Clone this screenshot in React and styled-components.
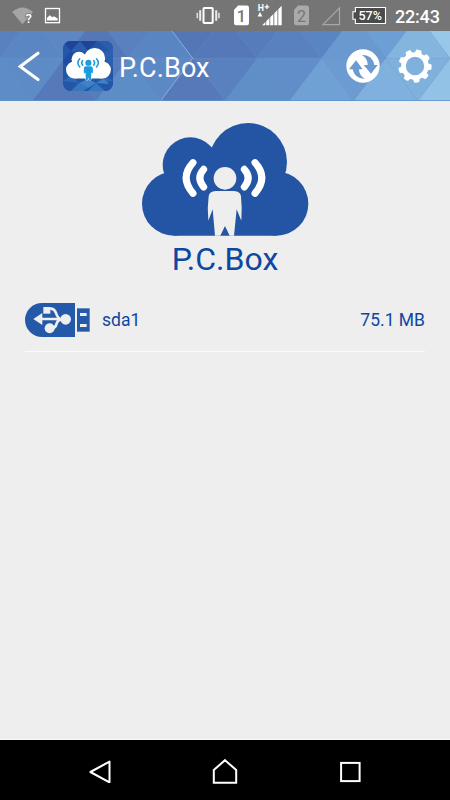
import React from 'react';
import styled, { createGlobalStyle } from 'styled-components';

const GlobalStyle = createGlobalStyle`
  * {
    box-sizing: border-box;
  }
  body {
    margin: 0;
    background: #eeeeee;
    font-family: Roboto, "Liberation Sans", sans-serif;
  }
  svg {
    display: block;
    flex: none;
  }
`;

const Screen = styled.div`
  display: flex;
  flex-direction: column;
  height: 100vh;
  min-height: 800px;
`;

const StatusBar = styled.div`
  display: flex;
  height: 31px;
  background: #757575;
`;

const StatusGroup = styled.div`
  display: flex;
`;

const Spacer = styled.div`
  flex: 1;
`;

const Clock = styled.div`
  width: 61px;
  padding-left: 6px;
  color: white;
  font-size: 18px;
  font-weight: 500;
  line-height: 33px;
  letter-spacing: -0.2px;
`;

const HeaderBar = styled.header`
  position: relative;
  height: 70px;
  overflow: hidden;
  background: #5b82c0;
`;

const Backdrop = styled.svg`
  position: absolute;
  top: 0;
  left: 0;
`;

const HeaderContent = styled.div`
  position: relative;
  display: flex;
  align-items: center;
  height: 70px;
  padding: 0 18px 0 17px;
`;

const AppIcon = styled.div`
  width: 50px;
  height: 50px;
  margin-left: 22px;
  border-radius: 8px;
  overflow: hidden;
  display: grid;
  background: #245bab;

  > svg {
    grid-area: 1 / 1;
  }
`;

const IconCloud = styled.div`
  grid-area: 1 / 1;
  z-index: 1;
  padding: 7px 0 0 2.5px;
`;

const Title = styled.div`
  flex: 1;
  margin-left: 6px;
  color: white;
  font-size: 27px;
  font-weight: 400;
  line-height: 32px;
  letter-spacing: 0.1px;
  padding-top: 3px;
`;

const Actions = styled.div`
  display: flex;
  gap: 18px;
`;

const Content = styled.main`
  flex: 1;
  background: #eeeeee;
  border-bottom: 1px solid #fafafa;
  padding: 21.67px 25px 0;
`;

const Brand = styled.div`
  display: flex;
  flex-direction: column;
  align-items: center;
`;

const BrandName = styled.div`
  margin-top: 4.6px;
  color: #0d47a1;
  font-size: 32px;
  line-height: 38px;
`;

const DriveRow = styled.div`
  display: flex;
  align-items: center;
  height: 63px;
  margin-top: 11px;
  border-bottom: 1px solid #fbfbfb;
  color: #0d47a1;
  font-size: 17.5px;
`;

const DriveName = styled.div`
  flex: 1;
  margin-left: 12px;
`;

const DriveSize = styled.div`
  text-align: right;
`;

const NavBar = styled.nav`
  display: grid;
  grid-template-columns: repeat(3, 125px);
  justify-content: center;
  align-items: center;
  justify-items: center;
  height: 60px;
  background: black;
`;

// every triangle of the header mosaic sits on a 64.3px lattice
const STEP = 64.3;
const UPPER_UP = ['#5a86c3', '#5477b8', '#5985c3', '#5478b8', '#5981c0', '#6a99cf', '#84b5df'];
const UPPER_DOWN = ['#5981c1', '#5c87c3', '#5a80bf', '#5376b7', '#567cbc', '#5a85c3', '#6c9fd3', '#99c7ea'];
const LOWER_DOWN = ['#5d8bc6', '#577cbb', '#5c89c5', '#5981bf', '#618ec8', '#6b9bd1', '#7fb1dc'];
const LOWER_UP = ['#5d8cc6', '#5679b9', '#5d8dc7', '#5579b9', '#608fc8', '#70a1d4', '#80b1de', '#92c2e6'];

function Mosaic() {
  const tri = (points, fill) => (
    <polygon key={points} points={points} fill={fill} stroke="#8fb4e0" strokeWidth="0.3" strokeOpacity="0.35" />
  );
  return (
    <Backdrop width="450" height="70" viewBox="0 0 450 70">
      {UPPER_DOWN.map((c, k) =>
        tri(`${k * STEP},27.3 ${(k - 0.5) * STEP},-15 ${(k + 0.5) * STEP},-15`, c))}
      {UPPER_UP.map((c, k) =>
        tri(`${k * STEP},27.3 ${(k + 1) * STEP},27.3 ${(k + 0.5) * STEP},-15`, c))}
      {LOWER_UP.map((c, k) =>
        tri(`${k * STEP},27.3 ${(k - 0.5) * STEP},69.7 ${(k + 0.5) * STEP},69.7`, c))}
      {LOWER_DOWN.map((c, k) =>
        tri(`${k * STEP},27.3 ${(k + 1) * STEP},27.3 ${(k + 0.5) * STEP},69.7`, c))}
      <path d="M172 0L192.7 27.3L160.7 69.7" fill="none" stroke="#bcd3ee" strokeWidth="0.6" strokeOpacity="0.8" />
      <path d="M0 69.6H450" stroke="#5d93cc" strokeWidth="0.8" />
    </Backdrop>
  );
}

const PERSON = 'M256 227H311Q330 228 332 243Q336 280 333 316L319 282L311 361H298L284 332L270 361H254L247 282L234 316Q230 280 235 243Q237 228 256 227Z';
const SMALL_PERSON = 'M256 227H311Q330 228 332 243Q336 280 333 306L317 296L311 378H292L284 350L276 378H257L251 296L234 306Q230 280 235 243Q237 228 256 227Z';

function CloudLogo({ width, cloud, person, waves, small }) {
  return (
    <svg width={width} height={width * 0.676} viewBox="35 23 500 338" overflow="visible">
      <g fill={cloud}>
        <circle cx="131" cy="265" r="96" />
        <circle cx="180" cy="149" r="83" />
        <circle cx="353" cy="140" r="117" />
        <circle cx="438" cy="265" r="96" />
        <path d="M131 361V170L245 95L430 190L438 361Z" />
      </g>
      <circle cx="284" cy="189" r="34" fill={person} />
      <path
        d={small ? SMALL_PERSON : PERSON}
        fill={person}
        stroke={small ? 'white' : 'none'}
        strokeWidth="10"
        paintOrder="stroke"
      />
      <g fill="none" stroke={waves} strokeWidth={small ? 17 : 21} strokeLinecap="round">
        <path d="M188 142Q147 187 188 234" />
        <path d="M220 162Q197 187 220 215" />
        <path d="M342 162Q365 187 342 215" />
        <path d="M374 142Q415 187 374 234" />
      </g>
    </svg>
  );
}

function IconPattern() {
  return (
    <svg width="50" height="50" viewBox="0 0 50 50">
      <rect width="50" height="50" fill="#2356a7" />
      <path d="M0 0H17L8 10ZM17 0H34L25 10Z" fill="#20439a" />
      <path d="M8 10L17 0L25 10ZM34 0L50 0V12Z" fill="#2a5dae" />
      <path d="M0 20L8 10L16 20L8 32Z" fill="#204a9e" />
      <path d="M38 12L50 8V28Z" fill="#2b60b0" />
      <path d="M0 40L8 34L16 42ZM33 42L42 34L50 40Z" fill="#2c68b5" />
      <path d="M16 42L25 38L33 42L25 47ZM33 42L41 38L46 43Z" fill="#3f82c8" />
      <path d="M16 42L25 47L20 50H8ZM33 42L42 50H25Z" fill="#3777c0" />
    </svg>
  );
}

function BackArrow() {
  return (
    <svg width="24" height="34" viewBox="17 49 24 34">
      <path d="M38 53.2L20.2 66.4L38 79.6" fill="none" stroke="white" strokeWidth="3.1" strokeLinecap="round" />
    </svg>
  );
}

function SyncIcon() {
  return (
    <svg width="34" height="34" viewBox="362 63 102 102">
      <path
        fill="white"
        fillRule="evenodd"
        d="M463 114A50 50 0 1 1 363 114A50 50 0 1 1 463 114Z
           M371 124L392 97L412 124H401Q401 142 418 152Q388 153 382 124Z
           M415 111H427Q427 90 409 80Q441 80 447 111H457L437 137Z"
      />
    </svg>
  );
}

function GearIcon() {
  const teeth = Array.from({ length: 9 }, (_, i) => i * 40 + 4);
  return (
    <svg width="34" height="34" viewBox="-17 -17 34 34">
      <circle r="11.5" fill="none" stroke="white" strokeWidth="4.6" />
      {teeth.map((a) => (
        <path key={a} d="M12.5 -3.4L16.4 -2.6Q16.9 0 16.4 2.6L12.5 3.4Z" fill="white" transform={`rotate(${a})`} />
      ))}
    </svg>
  );
}

function UsbIcon() {
  return (
    <svg width="65" height="34" viewBox="30 24 195 102">
      <path d="M180 24V126H81A51 51 0 0 1 81 24Z" fill="#2459a9" />
      <rect x="186" y="40" width="38" height="70" fill="#2459a9" />
      <rect x="195" y="54" width="20" height="9" fill="#eeeeee" />
      <rect x="195" y="87" width="20" height="9" fill="#eeeeee" />
      <g fill="#eeeeee">
        <path d="M55 72L82 54V90Z" />
        <rect x="85" y="36" width="21" height="20" />
        <circle cx="152" cy="73" r="16" />
        <circle cx="104" cy="100" r="15" />
      </g>
      <path d="M78 72H150M104 41Q118 40 123 54Q128 72 142 73M104 100Q121 101 124 88Q128 73 142 73" fill="none" stroke="#eeeeee" strokeWidth="8" />
    </svg>
  );
}

function StatusIcons() {
  return (
    <StatusGroup>
      {/* vibrate */}
      <svg width="34" height="31" viewBox="194 0 34 31">
        <rect x="203.5" y="8" width="9.2" height="15" rx="0.8" fill="none" stroke="white" strokeWidth="2" />
        <path d="M200.2 10.3V20.8M216.2 10.3V20.8" stroke="#ededed" strokeWidth="2" />
        <path d="M197.3 12.7V18.3M218.9 12.7V18.3" stroke="#dedede" strokeWidth="1.6" />
      </svg>
      {/* sim 1 */}
      <svg width="28" height="31" viewBox="228 0 28 31">
        <path d="M238 5.5H247Q249 5.5 249 7.5V23Q249 25.3 247 25.3H236Q234 25.3 234 23V10Z" fill="white" />
        <text x="241.4" y="21.6" textAnchor="middle" fontSize="16" fontWeight="500" fill="#757575">1</text>
      </svg>
      {/* signal */}
      <svg width="34" height="31" viewBox="256 0 34 31">
        <text x="257.7" y="10.6" fontSize="8.8" fontWeight="700" fill="white">H</text>
        <path d="M264.6 6.8H269.2M266.9 4.5V9.1" stroke="white" strokeWidth="1.3" />
        <path d="M257.6 16.4L260 12L262.4 16.4Z" fill="white" />
        <path d="M262.2 25.3L265.4 22.1V25.3ZM266.2 25.3V21.3L269.4 18.1V25.3ZM270.2 25.3V17.3L273.4 14.1V25.3ZM274.3 25.3V13.2L277.4 10.1V25.3ZM278.3 25.3V9.2L281.7 5.8V25.3Z" fill="white" />
      </svg>
      {/* sim 2 */}
      <svg width="28" height="31" viewBox="290 0 28 31">
        <path d="M298 5.5H307Q309 5.5 309 7.5V23Q309 25.3 307 25.3H296Q294 25.3 294 23V10Z" fill="#aaaaaa" />
        <text x="301.4" y="21.6" textAnchor="middle" fontSize="16" fill="#757575">2</text>
      </svg>
      {/* empty signal */}
      <svg width="31" height="31" viewBox="318 0 31 31">
        <path d="M323 24.7L339.5 8V24.7Z" fill="none" stroke="#a7a7a7" strokeWidth="1.2" />
      </svg>
      {/* battery */}
      <svg width="40" height="31" viewBox="349 0 40 31">
        <path d="M355.4 7.5H385.5V23.5H355.4V19.2H352.9V11.8H355.4Z" fill="#4b4b4b" stroke="white" strokeWidth="1.1" />
        <text x="370.2" y="20.2" textAnchor="middle" fontSize="12.8" fontWeight="500" fill="white" textLength="23.5" lengthAdjust="spacingAndGlyphs">57%</text>
      </svg>
    </StatusGroup>
  );
}

function Notifications() {
  return (
    <StatusGroup>
      <svg width="64" height="31" viewBox="0 0 64 31">
        <path d="M12.2 12Q22.5 3 33 12L22.5 24.3Z" fill="#a5a5a5" />
        <text x="28.7" y="22.7" textAnchor="middle" fontSize="13" fontWeight="500" fill="white" stroke="#757575" strokeWidth="1.6" paintOrder="stroke">?</text>
        <rect x="45.5" y="8.5" width="14" height="14.2" fill="none" stroke="white" strokeWidth="1.3" />
        <path d="M47 20.5V18L49.7 15.3L52.5 17.3L54 16.3L57.7 18.6V20.5Z" fill="white" />
      </svg>
    </StatusGroup>
  );
}

const App = () => (
  <Screen>
    <GlobalStyle />
    <StatusBar>
      <Notifications />
      <Spacer />
      <StatusIcons />
      <Clock>22:43</Clock>
    </StatusBar>
    <HeaderBar>
      <Mosaic />
      <HeaderContent>
        <BackArrow />
        <AppIcon>
          <IconPattern />
          <IconCloud>
            <CloudLogo small width={45} cloud="white" person="#1c9ce0" waves="#1c9ce0" />
          </IconCloud>
        </AppIcon>
        <Title>P.C.Box</Title>
        <Actions>
          <SyncIcon />
          <GearIcon />
        </Actions>
      </HeaderContent>
    </HeaderBar>
    <Content>
      <Brand>
        <CloudLogo width={166.67} cloud="#2355a4" person="#eeeeee" waves="white" />
        <BrandName>P.C.Box</BrandName>
      </Brand>
      <DriveRow>
        <UsbIcon />
        <DriveName>sda1</DriveName>
        <DriveSize>75.1 MB</DriveSize>
      </DriveRow>
    </Content>
    <NavBar>
      <svg width="24" height="26" viewBox="88 757 24 26">
        <path d="M90.4 772L109.5 761.6V782.4Z" fill="none" stroke="white" strokeWidth="2" strokeLinejoin="round" />
      </svg>
      <svg width="26" height="26" viewBox="212 757 26 26" overflow="visible">
        <path d="M225 760.2L236.2 770V782.7H213.8V770Z" fill="none" stroke="white" strokeWidth="2" />
      </svg>
      <svg width="24" height="26" viewBox="338 757 24 26">
        <rect x="341.1" y="762.9" width="18.5" height="18.2" fill="none" stroke="white" strokeWidth="2" />
      </svg>
    </NavBar>
  </Screen>
);

export default App;
